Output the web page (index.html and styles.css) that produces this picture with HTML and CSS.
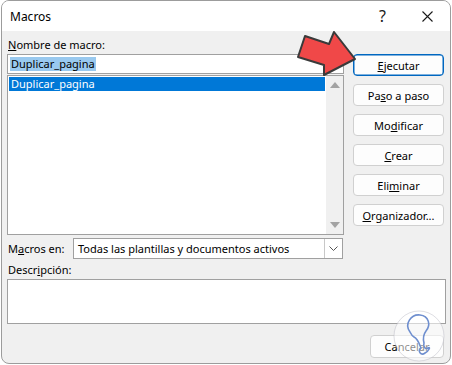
FILE: index.html
```html
<!DOCTYPE html>
<html lang="es">
<head>
    <meta charset="UTF-8">
    <title>Macros</title>
    <link rel="stylesheet" href="styles.css">
</head>
<body>
    <div class="ventana">
        <div class="titulo">
            <span class="nombre">Macros</span>
            <span class="ayuda">?</span>
            <span class="cerrar">
                <svg width="11" height="11" viewBox="0 0 11 11"><path d="M0.5 0.5 L10.5 10.5 M10.5 0.5 L0.5 10.5" stroke="#1a1a1a" stroke-width="1.1" fill="none"/></svg>
            </span>
        </div>
        <div class="cuerpo">
            <div class="arriba">
                <div class="izquierda">
                    <div class="etiqueta"><u>N</u>ombre de macro:</div>
                    <div class="caja-nombre"><span class="seleccion">Duplicar_pagina</span></div>
                    <div class="lista">
                        <div class="items">
                            <div class="item activo">Duplicar_pagina</div>
                        </div>
                        <div class="barra">
                            <svg width="10" height="6" viewBox="0 0 10 6"><path d="M0 6 L5 0 L10 6 Z" fill="#a3a3a3"/></svg>
                            <svg width="10" height="6" viewBox="0 0 10 6"><path d="M0 0 L5 6 L10 0 Z" fill="#a3a3a3"/></svg>
                        </div>
                    </div>
                </div>
                <div class="botones">
                    <button type="button" class="principal"><u>E</u>jecutar</button>
                    <button type="button">Pa<u>s</u>o a paso</button>
                    <button type="button">Mo<u>d</u>ificar</button>
                    <button type="button"><u>C</u>rear</button>
                    <button type="button">Eli<u>m</u>inar</button>
                    <button type="button"><u>O</u>rganizador...</button>
                </div>
            </div>
            <div class="fila-macros">
                <span class="etiqueta-en">M<u>a</u>cros en:</span>
                <div class="selector">
                    <span class="valor">Todas las plantillas y documentos activos</span>
                    <span class="flecha">
                        <svg width="9" height="5" viewBox="0 0 9 5"><path d="M0.5 0.5 L4.5 4.5 L8.5 0.5" stroke="#555" stroke-width="1" fill="none"/></svg>
                    </span>
                </div>
            </div>
            <div class="etiqueta desc-lbl">Descr<u>i</u>pción:</div>
            <div class="descripcion"></div>
            <div class="pie">
                <button type="button">Cancelar</button>
            </div>
        </div>

        <svg class="flecha-roja" width="64" height="50" viewBox="0 0 64 50">
            <path d="M11 5 L35 13 L40 1 L61 28 L30 44 L30 34 L4 26 Z" fill="#f04848" stroke="#3a3a3a" stroke-width="2" stroke-linejoin="round"/>
        </svg>

        <div class="marca">
            <svg width="52" height="52" viewBox="0 0 52 52">
                <circle cx="26" cy="26" r="25" fill="rgba(255,255,255,0.55)" stroke="rgba(190,190,200,0.5)" stroke-width="1"/>
                <path d="M17 22 C11 14, 18 4, 27 5 C36 6, 38 15, 33 21 C30 25, 30 29, 31 33 C30 36, 32 40, 35 38 C38 36, 36 41, 32 43 C28 46, 24 41, 28 38 C26 33, 25 29, 21 27 C19 26, 18 24, 17 22 Z" fill="none" stroke="#6f8fcf" stroke-width="1.6" stroke-linejoin="round"/>
            </svg>
        </div>
    </div>
</body>
</html>
```

FILE: styles.css
```css
body{
    margin: 0;
    background-color: #ffffff;
    font-family: "Noto Sans", "Open Sans", sans-serif;
    font-size: 11px;
    color: #000;
}
.ventana{
    position: relative;
    width: 448px;
    height: 362px;
    margin-left: 1px;
    border: 1px solid #9c9c9c;
    border-radius: 8px;
    background-color: #f0f0f0;
    overflow: hidden;
}
.titulo{
    height: 30px;
    background-color: #ffffff;
    display: flex;
    align-items: center;
    padding-left: 8px;
}
.nombre{
    flex: 1;
    font-size: 12px;
}
.ayuda{
    font-size: 16px;
    margin-right: 36px;
    color: #1a1a1a;
}
.cerrar{
    display: flex;
    margin-right: 17px;
}
.cuerpo{
    padding: 6px 4px 0 5px;
}
.arriba{
    display: flex;
    gap: 9px;
    margin-right: 2px;
}
.izquierda{
    width: 337px;
}
.etiqueta{
    line-height: 16px;
    height: 16px;
    padding-left: 1px;
    margin-bottom: 1px;
}
.caja-nombre{
    height: 18px;
    border: 1px solid #a0a0a0;
    background-color: #fff;
    display: flex;
    align-items: center;
    padding-left: 2px;
}
.seleccion{
    background-color: #99c9ef;
    line-height: 14px;
    padding: 0 1px;
}
.lista{
    height: 158px;
    border: 1px solid #a0a0a0;
    background-color: #fff;
    display: flex;
    margin-top: 1px;
}
.items{
    flex: 1;
    padding: 1px 1px 0 1px;
}
.item{
    height: 14px;
    line-height: 14px;
    padding-left: 2px;
}
.activo{
    background-color: #0078d7;
    color: #fff;
}
.barra{
    width: 17px;
    background-color: #f0f0f0;
    display: flex;
    flex-direction: column;
    justify-content: space-between;
    align-items: center;
    padding: 6px 0 6px 0;
}
.botones{
    width: 91px;
    display: flex;
    flex-direction: column;
    gap: 8px;
    padding-top: 17px;
}
button{
    height: 22px;
    border: 1px solid #d0d0d0;
    border-radius: 4px;
    background-color: #fdfdfd;
    font-family: "Noto Sans", "Open Sans", sans-serif;
    font-size: 11px;
    color: #000;
    padding: 0;
}
.principal{
    border: 1px solid #0067c0;
    box-shadow: inset 0 0 0 0.5px #0067c0;
}
.fila-macros{
    display: flex;
    align-items: center;
    margin-top: 3px;
    margin-right: 103px;
}
.etiqueta-en{
    width: 65px;
    padding-left: 1px;
}
.selector{
    flex: 1;
    height: 19px;
    border: 1px solid #a0a0a0;
    background-color: #fff;
    display: flex;
    align-items: center;
}
.valor{
    flex: 1;
    padding-left: 4px;
}
.flecha{
    width: 17px;
    height: 19px;
    border-left: 1px solid #c8c8c8;
    display: flex;
    align-items: center;
    justify-content: center;
}
.desc-lbl{
    margin-top: 3px;
}
.descripcion{
    height: 43px;
    border: 1px solid #a0a0a0;
    background-color: #fff;
}
.pie{
    display: flex;
    justify-content: flex-end;
    margin-top: 11px;
    margin-right: 2px;
}
.pie button{
    width: 74px;
    height: 23px;
}
.flecha-roja{
    position: absolute;
    left: 292px;
    top: 30px;
}
.marca{
    position: absolute;
    left: 391px;
    top: 309px;
    width: 52px;
    height: 52px;
}
```
